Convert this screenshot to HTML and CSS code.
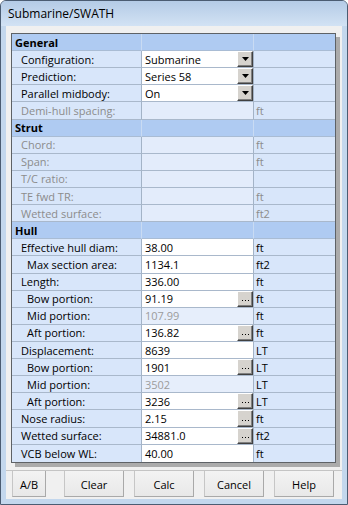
FILE: index.html
```html
<!DOCTYPE html>
<html lang="en">
<head>
  <meta charset="UTF-8">
  <title>Submarine/SWATH</title>
  <link rel="stylesheet" href="styles.css">
</head>
<body>

<div class="window">
  <div class="titlebar">Submarine/SWATH</div>

  <div class="client">
    <div class="inspector">

      <div class="row head"><div class="cell name">General</div><div class="cell val"></div><div class="cell unit"></div></div>
      <div class="row"><div class="cell name l1">Configuration:</div><div class="cell val edit"><span class="txt">Submarine</span><span class="btn drop"><svg width="7" height="4"><path d="M0 0h7L3.5 4z"/></svg></span></div><div class="cell unit"></div></div>
      <div class="row"><div class="cell name l1">Prediction:</div><div class="cell val edit"><span class="txt">Series 58</span><span class="btn drop"><svg width="7" height="4"><path d="M0 0h7L3.5 4z"/></svg></span></div><div class="cell unit"></div></div>
      <div class="row"><div class="cell name l1">Parallel midbody:</div><div class="cell val edit"><span class="txt">On</span><span class="btn drop"><svg width="7" height="4"><path d="M0 0h7L3.5 4z"/></svg></span></div><div class="cell unit"></div></div>
      <div class="row off"><div class="cell name l1">Demi-hull spacing:</div><div class="cell val"></div><div class="cell unit">ft</div></div>

      <div class="row head"><div class="cell name">Strut</div><div class="cell val"></div><div class="cell unit"></div></div>
      <div class="row off"><div class="cell name l1">Chord:</div><div class="cell val"></div><div class="cell unit">ft</div></div>
      <div class="row off"><div class="cell name l1">Span:</div><div class="cell val"></div><div class="cell unit">ft</div></div>
      <div class="row off"><div class="cell name l1">T/C ratio:</div><div class="cell val"></div><div class="cell unit"></div></div>
      <div class="row off"><div class="cell name l1">TE fwd TR:</div><div class="cell val"></div><div class="cell unit">ft</div></div>
      <div class="row off"><div class="cell name l1">Wetted surface:</div><div class="cell val"></div><div class="cell unit">ft2</div></div>

      <div class="row head"><div class="cell name">Hull</div><div class="cell val"></div><div class="cell unit"></div></div>
      <div class="row"><div class="cell name l1">Effective hull diam:</div><div class="cell val edit"><span class="txt">38.00</span></div><div class="cell unit">ft</div></div>
      <div class="row"><div class="cell name l2">Max section area:</div><div class="cell val edit"><span class="txt">1134.1</span></div><div class="cell unit">ft2</div></div>
      <div class="row"><div class="cell name l1">Length:</div><div class="cell val edit"><span class="txt">336.00</span></div><div class="cell unit">ft</div></div>
      <div class="row"><div class="cell name l2">Bow portion:</div><div class="cell val edit"><span class="txt">91.19</span><span class="btn more"><svg width="7" height="2"><path d="M0 0h1v1H0zM3 0h1v1H3zM6 0h1v1H6z"/></svg></span></div><div class="cell unit">ft</div></div>
      <div class="row"><div class="cell name l2">Mid portion:</div><div class="cell val calc"><span class="txt">107.99</span></div><div class="cell unit">ft</div></div>
      <div class="row"><div class="cell name l2">Aft portion:</div><div class="cell val edit"><span class="txt">136.82</span><span class="btn more"><svg width="7" height="2"><path d="M0 0h1v1H0zM3 0h1v1H3zM6 0h1v1H6z"/></svg></span></div><div class="cell unit">ft</div></div>
      <div class="row"><div class="cell name l1">Displacement:</div><div class="cell val edit"><span class="txt">8639</span></div><div class="cell unit">LT</div></div>
      <div class="row"><div class="cell name l2">Bow portion:</div><div class="cell val edit"><span class="txt">1901</span><span class="btn more"><svg width="7" height="2"><path d="M0 0h1v1H0zM3 0h1v1H3zM6 0h1v1H6z"/></svg></span></div><div class="cell unit">LT</div></div>
      <div class="row"><div class="cell name l2">Mid portion:</div><div class="cell val calc"><span class="txt">3502</span></div><div class="cell unit">LT</div></div>
      <div class="row"><div class="cell name l2">Aft portion:</div><div class="cell val edit"><span class="txt">3236</span><span class="btn more"><svg width="7" height="2"><path d="M0 0h1v1H0zM3 0h1v1H3zM6 0h1v1H6z"/></svg></span></div><div class="cell unit">LT</div></div>
      <div class="row"><div class="cell name l1">Nose radius:</div><div class="cell val edit"><span class="txt">2.15</span><span class="btn more"><svg width="7" height="2"><path d="M0 0h1v1H0zM3 0h1v1H3zM6 0h1v1H6z"/></svg></span></div><div class="cell unit">ft</div></div>
      <div class="row"><div class="cell name l1">Wetted surface:</div><div class="cell val edit"><span class="txt">34881.0</span><span class="btn more"><svg width="7" height="2"><path d="M0 0h1v1H0zM3 0h1v1H3zM6 0h1v1H6z"/></svg></span></div><div class="cell unit">ft2</div></div>
      <div class="row last"><div class="cell name l1">VCB below WL:</div><div class="cell val edit"><span class="txt">40.00</span></div><div class="cell unit">ft</div></div>

    </div>

    <div class="buttons">
      <button class="ab">A/B</button>
      <button class="clear">Clear</button>
      <button>Calc</button>
      <button>Cancel</button>
      <button>Help</button>
    </div>
  </div>
</div>

</body>
</html>
```

FILE: styles.css
```css
* {
  box-sizing: border-box;
}

body {
  margin: 0;
  font-family: "Open Sans", "Noto Sans", sans-serif;
  font-size: 11px;
  color: #000;
  background: #fff;
}

.window {
  width: 348px;
  height: 505px;
  border: 1px solid #4b5c72;
  border-radius: 6px 6px 0 0;
  background: #c3d7ed;
  padding: 0 5px 5px;
  display: flex;
  flex-direction: column;
  overflow: hidden;
}

.titlebar {
  height: 25px;
  margin: 0 -5px;
  padding: 4px 0 0 7px;
  font-size: 12px;
  color: #000;
  background: linear-gradient(#b4cbe6, #d2e2f4);
}

.client {
  flex: 1;
  background: #f0f0f0;
  display: flex;
  flex-direction: column;
}

/* property grid */
.inspector {
  width: 325px;
  margin: 7px 0 0 5px;
  border: 1px solid #5e6266;
  box-shadow: 4px 4px 0 #ababab;
  background: #dae7fa;
}

.row {
  display: grid;
  grid-template-columns: 130px 112px 81px;
  height: 17.12px;
}

.cell {
  display: flex;
  align-items: center;
  border-bottom: 1px solid #a9b8cb;
  white-space: nowrap;
  overflow: hidden;
}

.row.last .cell {
  border-bottom: none;
}

.name,
.val {
  border-right: 1px solid #a3b3c7;
}

.name {
  padding-left: 9px;
  background: #d8e6fa;
}

.name.l2 {
  padding-left: 15px;
}

.val {
  padding-left: 3px;
  background: #e3ecfb;
}

.val.edit {
  background: #fff;
}

.val.calc {
  color: #9c9c9c;
  background: #e6eefb;
}

.unit {
  padding-left: 2px;
  background: #d8e6fa;
}

.head .cell {
  background: #afcbf2;
  border-bottom-color: #a9bcd4;
  border-right-color: #c9dbf3;
}

.head .name {
  padding-left: 3px;
  font-weight: bold;
}

.off .cell {
  color: #8c8c8c;
}

.txt {
  flex: 1;
}

.btn {
  align-self: stretch;
  width: 16px;
  display: flex;
  align-items: center;
  justify-content: center;
  background: #d6d3ce;
  border: 1px solid;
  border-color: #fff #404040 #404040 #fff;
  box-shadow: inset -1px -1px #808080;
}

.btn.more {
  align-items: flex-end;
  padding-bottom: 4px;
}

.btn path {
  fill: #000;
}

/* bottom buttons */
.buttons {
  margin-top: auto;
  border-top: 1px solid #c4c4c4;
  padding: 0 0 2px 6px;
  display: flex;
  gap: 10px;
}

.buttons button {
  width: 60px;
  height: 26px;
  padding: 2px 0 0;
  font-family: "Open Sans", "Noto Sans", sans-serif;
  font-size: 11px;
  color: #000;
  background: linear-gradient(#f3f3f3, #e8e8e8);
  border: 1px solid #c6c6c6;
  border-top: none;
  border-right-color: #a9a9a9;
  border-bottom-color: #a9a9a9;
}

.buttons .ab {
  width: 34px;
}

.buttons .clear {
  margin-left: 8px;
}
```
